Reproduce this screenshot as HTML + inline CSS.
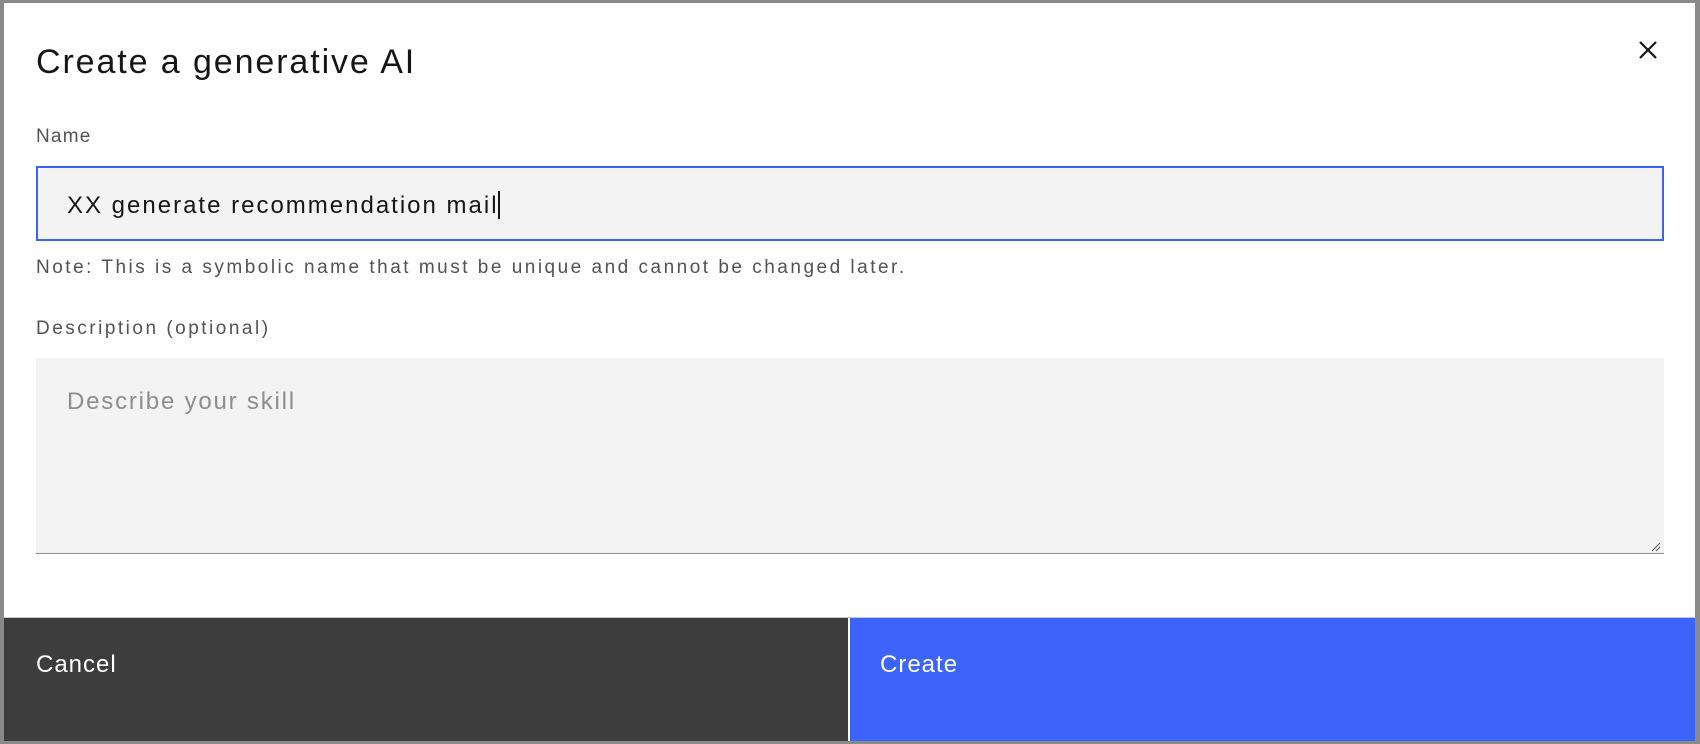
<!DOCTYPE html>
<html><head><style>
html,body{margin:0;padding:0;}
body{width:1700px;height:744px;background:#8a8a8a;position:relative;overflow:hidden;font-family:"Liberation Sans",sans-serif;}
.modal{position:absolute;left:4px;top:3px;width:1691px;height:738px;background:#fff;}
.t{position:absolute;color:#161616;white-space:nowrap;}
</style></head><body>
<div class="modal">
  <div class="t" style="left:32px;top:40px;font-size:34px;letter-spacing:1.9px;">Create a generative AI</div>
  <svg style="position:absolute;left:1634px;top:37px" width="20" height="20" viewBox="0 0 20 20"><path d="M2 2L18 18M18 2L2 18" stroke="#161616" stroke-width="2.2"/></svg>
  <div class="t" style="left:32px;top:123px;font-size:19px;color:#525252;letter-spacing:1.2px;">Name</div>
  <div style="position:absolute;left:32px;top:163px;width:1628px;height:75px;box-sizing:border-box;border:2px solid #3d63f5;background:#f3f3f3;"></div>
  <div class="t" style="left:63px;top:188px;font-size:24px;letter-spacing:2px;">XX generate recommendation mail<span style="display:inline-block;width:2px;height:28px;background:#161616;vertical-align:-6px;margin-left:-1px"></span></div>
  <div class="t" style="left:32px;top:254px;font-size:19px;color:#525252;letter-spacing:2.5px;">Note: This is a symbolic name that must be unique and cannot be changed later.</div>
  <div class="t" style="left:32px;top:315px;font-size:19px;color:#525252;letter-spacing:2.5px;">Description (optional)</div>
  <div style="position:absolute;left:32px;top:355px;width:1628px;height:196px;box-sizing:border-box;background:#f3f3f3;border-bottom:1px solid #8d8d8d;"></div>
  <div class="t" style="left:63px;top:385px;font-size:24px;color:#8d8d8d;letter-spacing:1.8px;">Describe your skill</div>
  <svg style="position:absolute;left:1645px;top:537px" width="12" height="12"><path d="M11 3L3 11M11 7L7 11" stroke="#555" stroke-width="1"/></svg>
  <div style="position:absolute;left:0;top:614px;width:1691px;height:1px;background:#c6c6c6"></div>
  <div style="position:absolute;left:0;top:615px;width:844px;height:123px;background:#3d3d3d;"></div>
  <div style="position:absolute;left:846px;top:615px;width:845px;height:123px;background:#3c64fa;"></div>
  <div class="t" style="left:32px;top:648px;font-size:24px;color:#fff;letter-spacing:1px;">Cancel</div>
  <div class="t" style="left:876px;top:648px;font-size:24px;color:#fff;letter-spacing:1px;">Create</div>
</div>
</body></html>
